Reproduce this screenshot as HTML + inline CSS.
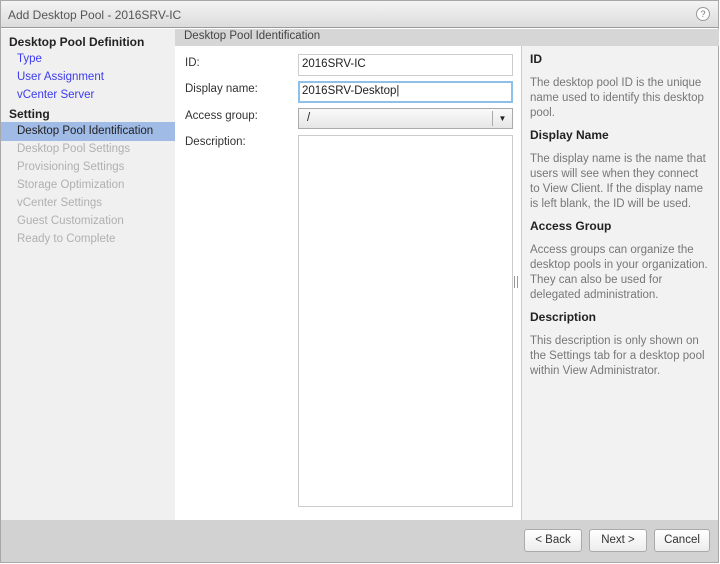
<!DOCTYPE html><html><head><style>
*{margin:0;padding:0;box-sizing:border-box}
body{width:720px;height:564px;font-family:"Liberation Sans","DejaVu Sans",sans-serif;font-size:11.5px;background:#fff;position:relative;overflow:hidden}
.abs{position:absolute}
#win{left:0;top:0;width:719px;height:563px;border:1px solid #a8a8a8}
#title{left:1px;top:1px;width:717px;height:27px;background:linear-gradient(#f4f4f4,#dcdcdc);border-bottom:1px solid #999;color:#555;font-size:12px;padding:7px 0 0 7px}
#help{right:8px;top:6px;width:14px;height:14px;border:1px solid #999;border-radius:50%;font-size:9px;text-align:center;line-height:12px;color:#777;background:#fff}
#nav{left:1px;top:29px;width:174px;height:491px;background:#f0f0f0}
.n{position:absolute;left:16px;font-size:11.5px}
.h{left:8px;font-weight:bold;color:#222;font-size:12px}
.l{color:#3b3bf0}.d{color:#b0b0b0}
#sel{left:0;top:93px;width:174px;height:19px;background:#9fbbe6}
#hdr{left:175px;top:29px;width:544px;height:17px;background:#d6d6d6;color:#444;padding:1px 0 0 9px}
#form{left:175px;top:46px;width:346px;height:474px;background:#fff}
.lab{position:absolute;left:10px;color:#333}
.inp{position:absolute;left:123px;width:215px;height:22px;border:1px solid #ccc;padding:3px 0 0 3px;color:#222}
#side{left:521px;top:46px;width:197px;height:474px;background:#f2f2f2;border-left:1px solid #ccc;padding:6px 8px;color:#777;line-height:15px}
#side b{display:block;color:#222;font-size:12px;margin-bottom:9px}
#side p{margin-bottom:7px}
#foot{left:1px;top:520px;width:717px;height:42px;background:#d2d2d2}
.btn{position:absolute;top:529px;height:23px;border:1px solid #aaa;border-radius:3px;background:linear-gradient(#fff,#ececec);text-align:center;line-height:21px;color:#333}
</style></head><body>
<div id="win" class="abs"></div>
<div id="title" class="abs">Add Desktop Pool - 2016SRV-IC<div id="help" class="abs">?</div></div>
<div id="nav" class="abs">
<div id="sel" class="abs"></div>
<div class="n h" style="top:6px">Desktop Pool Definition</div>
<div class="n l" style="top:24px">Type</div>
<div class="n l" style="top:42px">User Assignment</div>
<div class="n l" style="top:60px">vCenter Server</div>
<div class="n h" style="top:78px">Setting</div>
<div class="n" style="top:96px;color:#222">Desktop Pool Identification</div>
<div class="n d" style="top:114px">Desktop Pool Settings</div>
<div class="n d" style="top:132px">Provisioning Settings</div>
<div class="n d" style="top:150px">Storage Optimization</div>
<div class="n d" style="top:168px">vCenter Settings</div>
<div class="n d" style="top:186px">Guest Customization</div>
<div class="n d" style="top:204px">Ready to Complete</div>
</div>
<div id="hdr" class="abs">Desktop Pool Identification</div>
<div id="form" class="abs">
<div class="lab" style="top:11px">ID:</div>
<div class="lab" style="top:37px">Display name:</div>
<div class="lab" style="top:64px">Access group:</div>
<div class="lab" style="top:90px">Description:</div>
<div class="inp" style="top:8px">2016SRV-IC</div>
<div class="inp" style="top:35px;border:2px solid #8ec0e8;padding:2px 0 0 2px">2016SRV-Desktop|</div>
<div class="inp" style="top:62px;height:21px;background:linear-gradient(#fafafa,#e6e6e6);border-color:#aaa;padding-left:8px">/<span style="position:absolute;right:0;top:2px;width:20px;height:15px;border-left:1px solid #aaa;font-size:8px;text-align:center;line-height:15px">▼</span></div>
<div class="inp" style="top:89px;height:372px"></div>
<div class="abs" style="left:339px;top:230px;width:4px;height:12px;border-left:1px solid #999;border-right:1px solid #999"></div>
</div>
<div id="side" class="abs">
<b>ID</b><p>The desktop pool ID is the unique name used to identify this desktop pool.</p>
<b>Display Name</b><p>The display name is the name that users will see when they connect to View Client. If the display name is left blank, the ID will be used.</p>
<b>Access Group</b><p>Access groups can organize the desktop pools in your organization. They can also be used for delegated administration.</p>
<b>Description</b><p>This description is only shown on the Settings tab for a desktop pool within View Administrator.</p>
</div>
<div id="foot" class="abs"></div>
<div class="btn" style="left:524px;width:58px">&lt; Back</div>
<div class="btn" style="left:589px;width:58px">Next &gt;</div>
<div class="btn" style="left:654px;width:56px">Cancel</div>
</body></html>
